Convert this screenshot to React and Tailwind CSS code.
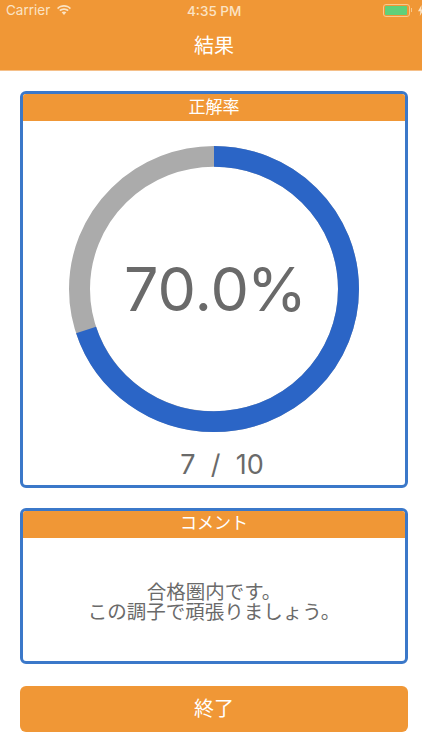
const jp = "font-['Inter','Noto_Sans_CJK_JP',sans-serif]";

const WifiIcon = () => (
  <svg width="16" height="12" viewBox="0 0 17 12" fill="#fbe3c4">
    <path d="M8.5 2.6c2.4 0 4.6.9 6.2 2.5l1.2-1.3C13.9 1.900 11.300.8 8.500.8S3.100 1.900 1.100 3.800l1.200 1.300C3.900 3.500 6.100 2.600 8.500 2.600z" />
    <path d="M8.500 5.900c1.500 0 2.800.6 3.800 1.500l1.200-1.300C12.200 4.900 10.400 4.100 8.500 4.100S4.800 4.900 3.500 6.100l1.200 1.300c1-.9 2.300-1.500 3.800-1.500z" />
    <path d="M8.500 7.500c-1 0-1.800.4-2.500 1l2.500 2.700L11 8.500c-.7-.6-1.500-1-2.500-1z" />
  </svg>
);

const BoltIcon = () => (
  <svg width="6" height="11" viewBox="0 0 6 11" fill="#fbe3c4">
    <path d="M3.500 0L0 6.200h2.400L1.800 11 6 4.400H3.400z" />
  </svg>
);

const StatusBar = () => (
  <div className="h-[20px] flex items-center justify-between relative text-[13.5px] text-[#fbe3c4]">
    <div className="flex items-center gap-[6px] pl-[6px]">
      <span>Carrier</span>
      <WifiIcon />
    </div>
    <span className="absolute left-[187px] top-[1px] font-medium">4:35 PM</span>
    <div className="flex items-center gap-[1px] mr-[-2px]">
      <div className="w-[27px] h-[13px] rounded-[3px] border border-[#f8c98c] p-[1px]">
        <div className="w-[22px] h-full rounded-[1px] bg-[#5fd07a]" />
      </div>
      <div className="w-[1px] h-[4px] bg-[#f8c98c]" />
      <div className="ml-[5px] flex">
        <BoltIcon />
      </div>
    </div>
  </div>
);

// drawn 290 x 286: the source shot is very slightly squashed
const Ring = () => (
  <svg width="290" height="286" viewBox="0 0 290 290" preserveAspectRatio="none" className="block">
    <circle cx="145" cy="145" r="134.500" fill="none" stroke="#ababab" strokeWidth="21" />
    <circle
      cx="145"
      cy="145"
      r="134.500"
      fill="none"
      stroke="#2b65c6"
      strokeWidth="21"
      pathLength="100"
      strokeDasharray="70 30"
      transform="rotate(-90 145 145)"
    />
  </svg>
);

const CardHeader = ({ title, className }) => (
  <div className={`bg-[#f09736] text-white text-center text-[17px] leading-none flex items-center justify-center ${className}`}>
    {title}
  </div>
);

export default function App() {
  return (
    <div className={`w-[422px] h-[750px] bg-white overflow-hidden ${jp}`}>
      <header className="bg-[#f09736] h-[71px] border-b border-[#f5c08a]">
        <StatusBar />
        <div className="h-[50px] flex items-center justify-center text-white text-[20px] pt-[2px] pl-[6px]">結果</div>
      </header>

      <main className="pl-[20px] pr-[14px] pt-[20px] flex flex-col">
        <section className="h-[397px] border-[3px] border-[#3b78c9] rounded-[6px] overflow-hidden flex flex-col">
          <CardHeader title="正解率" className="h-[27px]" />
          <div className="relative mt-[25px] self-center">
            <Ring />
            <div className="absolute inset-0 flex items-center justify-center pl-[3px] text-[#6a6a6a] text-[61px] leading-none font-normal">
              70.0<span className="ml-[-2px]">%</span>
            </div>
          </div>
          <div className="mt-[19px] pl-[16px] text-center text-[#6a6a6a] text-[27px] leading-none whitespace-pre">7  /  10</div>
        </section>

        <section className="mt-[20px] h-[156px] border-[3px] border-[#3b78c9] rounded-[6px] overflow-hidden flex flex-col">
          <CardHeader title="コメント" className="h-[27px] pb-[2px]" />
          <div className="flex-1 flex flex-col items-center justify-center text-[#6a6a6a] text-[19.500px] leading-[20px] pt-[4px]">
            <p>合格圏内です。</p>
            <p>この調子で頑張りましょう。</p>
          </div>
        </section>

        <button className="mt-[22px] h-[46px] rounded-[6px] bg-[#f09736] text-white text-[20px]">終了</button>
      </main>
    </div>
  );
}
